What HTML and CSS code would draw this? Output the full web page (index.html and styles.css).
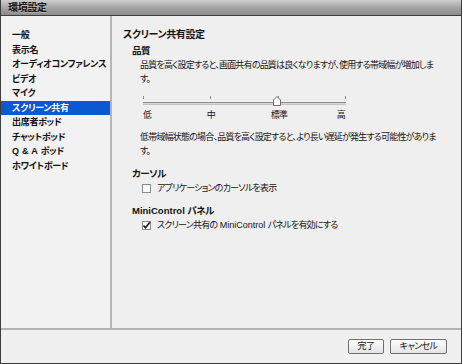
FILE: index.html
```html
<!DOCTYPE html>
<html lang="ja">
<head>
    <meta charset="UTF-8">
    <title>環境設定</title>
    <link rel="stylesheet" href="styles.css">
</head>
<body>
    <div class="window">
        <div class="titlebar">環境設定</div>
        <div class="content">
            <ul class="nav">
                <li>一般</li>
                <li>表示名</li>
                <li>オーディオコンファレンス</li>
                <li>ビデオ</li>
                <li>マイク</li>
                <li class="active">スクリーン共有</li>
                <li>出席者ポッド</li>
                <li>チャットポッド</li>
                <li><span class="latin">Q &amp; A </span>ポッド</li>
                <li>ホワイトボード</li>
            </ul>
            <div class="panel">
                <h2 class="panel-title">スクリーン共有設定</h2>

                <h3 class="section-title">品質</h3>
                <p class="desc">品質を高く設定すると、画面共有の品質は良くなりますが、使用する帯域幅が増加しま<br>す。</p>
                <div class="slider">
                    <div class="ticks">
                        <span></span><span></span><span></span><span></span>
                    </div>
                    <div class="track">
                        <div class="thumb">
                            <svg width="8" height="10" viewBox="0 0 8 10">
                                <path d="M0.5 9.5 V4 L4 0.5 L7.5 4 V9.5 Z" fill="#fbfbfb" stroke="#6e6e6e" stroke-width="1"/>
                            </svg>
                        </div>
                    </div>
                    <div class="labels">
                        <span>低</span><span>中</span><span>標準</span><span>高</span>
                    </div>
                </div>
                <p class="desc">低帯域幅状態の場合、品質を高く設定すると、より長い遅延が発生する可能性がありま<br>す。</p>

                <h3 class="section-title spaced">カーソル</h3>
                <label class="check">
                    <span class="box"></span>
                    アプリケーションのカーソルを表示
                </label>

                <h3 class="section-title spaced"><span class="latin">MiniControl </span>パネル</h3>
                <label class="check">
                    <span class="box">
                        <svg width="9" height="9" viewBox="0 0 9 9">
                            <path d="M1.5 4.5 L3.5 6.8 L7.8 1.2" fill="none" stroke="#1a1a1a" stroke-width="1.6"/>
                        </svg>
                    </span>
                    <span>スクリーン共有の<span class="latin"> MiniControl </span>パネルを有効にする</span>
                </label>
            </div>
        </div>
        <div class="footer">
            <button class="btn btn-ok">完了</button>
            <button class="btn btn-cancel">キャンセル</button>
        </div>
    </div>
</body>
</html>
```

FILE: styles.css
```css
* {
    margin: 0;
    padding: 0;
    box-sizing: border-box;
}
body {
    font-family: "Liberation Sans", "Noto Sans CJK JP", sans-serif;
    font-size: 9px;
    letter-spacing: -0.8px;
    color: #141414;
    background: #f0f0f0;
    font-feature-settings: "palt";
}
.latin {
    letter-spacing: 0;
    white-space: pre;
}
.window {
    width: 462px;
    height: 364px;
    display: flex;
    flex-direction: column;
    border: 1px solid #3c3c3c;
    border-top: none;
    background: #f0f0f0;
}
.titlebar {
    height: 16px;
    padding-left: 7px;
    line-height: 15px;
    font-weight: bold;
    font-size: 10px;
    letter-spacing: -0.3px;
    color: #151515;
    text-shadow: 0 1px 0 rgba(255, 255, 255, 0.35);
    background: linear-gradient(#cfcfcf, #a4a4a4 50%, #8c8c8c);
    border-bottom: 1px solid #3e3e3e;
}
.content {
    flex: 1;
    display: flex;
    border-bottom: 2px solid #b5b5b5;
}
.nav {
    width: 111px;
    flex-shrink: 0;
    list-style: none;
    padding-top: 12px;
    border-right: 2px solid #b5b5b5;
    background: #f2f2f2;
}
.nav li {
    height: 14.5px;
    line-height: 14.5px;
    padding-left: 11px;
    white-space: nowrap;
    color: #111;
    font-weight: bold;
    letter-spacing: -0.3px;
}
.nav li .latin {
    letter-spacing: 0.3px;
}
.nav li.active {
    background: #0a58d2;
    color: #fff;
}
.panel {
    flex: 1;
    padding: 12px 0 0 11px;
    background: #efefef;
}
.panel-title {
    font-size: 10px;
    font-weight: bold;
    line-height: 14px;
    letter-spacing: -0.4px;
}
.section-title {
    font-size: 9.5px;
    font-weight: bold;
    line-height: 14px;
    letter-spacing: -0.5px;
    margin: 2px 0 0 9px;
}
.section-title.spaced {
    margin-top: 9px;
}
.desc {
    line-height: 14px;
    margin-left: 17px;
    white-space: nowrap;
}
.slider {
    width: 203px;
    margin: 9px 0 8px 20px;
}
.ticks {
    height: 4px;
    display: flex;
    justify-content: space-between;
    padding-top: 1px;
}
.ticks span {
    width: 1px;
    height: 3px;
    background: #8c8c8c;
}
.track {
    position: relative;
    height: 3px;
    margin-top: 3px;
    background: #d6d6d6;
    border-top: 1px solid #8e8e8e;
    border-bottom: 1px solid #c4c4c4;
}
.thumb {
    position: absolute;
    left: 130px;
    top: -7px;
    width: 8px;
    height: 10px;
}
.thumb svg {
    display: block;
}
.labels {
    display: flex;
    justify-content: space-between;
    line-height: 14px;
    margin-top: 3px;
    padding-right: 1px;
}
.labels span:nth-child(2) {
    margin-left: 6px;
}
.labels span:nth-child(3) {
    margin-left: 6px;
}
.check {
    display: flex;
    align-items: center;
    gap: 6px;
    height: 14px;
    line-height: 14px;
    margin-left: 19px;
    white-space: nowrap;
}
.box {
    width: 9px;
    height: 9px;
    flex-shrink: 0;
    border: 1px solid #8a8a8a;
    background: #fafafa;
    position: relative;
}
.box svg {
    position: absolute;
    left: -1px;
    top: -1px;
}
.footer {
    flex: 0 0 33px;
    display: flex;
    justify-content: flex-end;
    align-items: flex-start;
    gap: 6px;
    padding: 9px 14px 0 0;
}
.btn {
    height: 15px;
    padding: 0;
    font-family: "Liberation Sans", "Noto Sans CJK JP", sans-serif;
    font-size: 9px;
    letter-spacing: -0.6px;
    line-height: 13px;
    white-space: nowrap;
    color: #141414;
    background: linear-gradient(#fdfdfd, #e4e4e4);
    border: 1px solid #707070;
    border-radius: 2px;
    font-feature-settings: "palt";
}
.btn-ok {
    width: 36px;
}
.btn-cancel {
    width: 57px;
}
```
